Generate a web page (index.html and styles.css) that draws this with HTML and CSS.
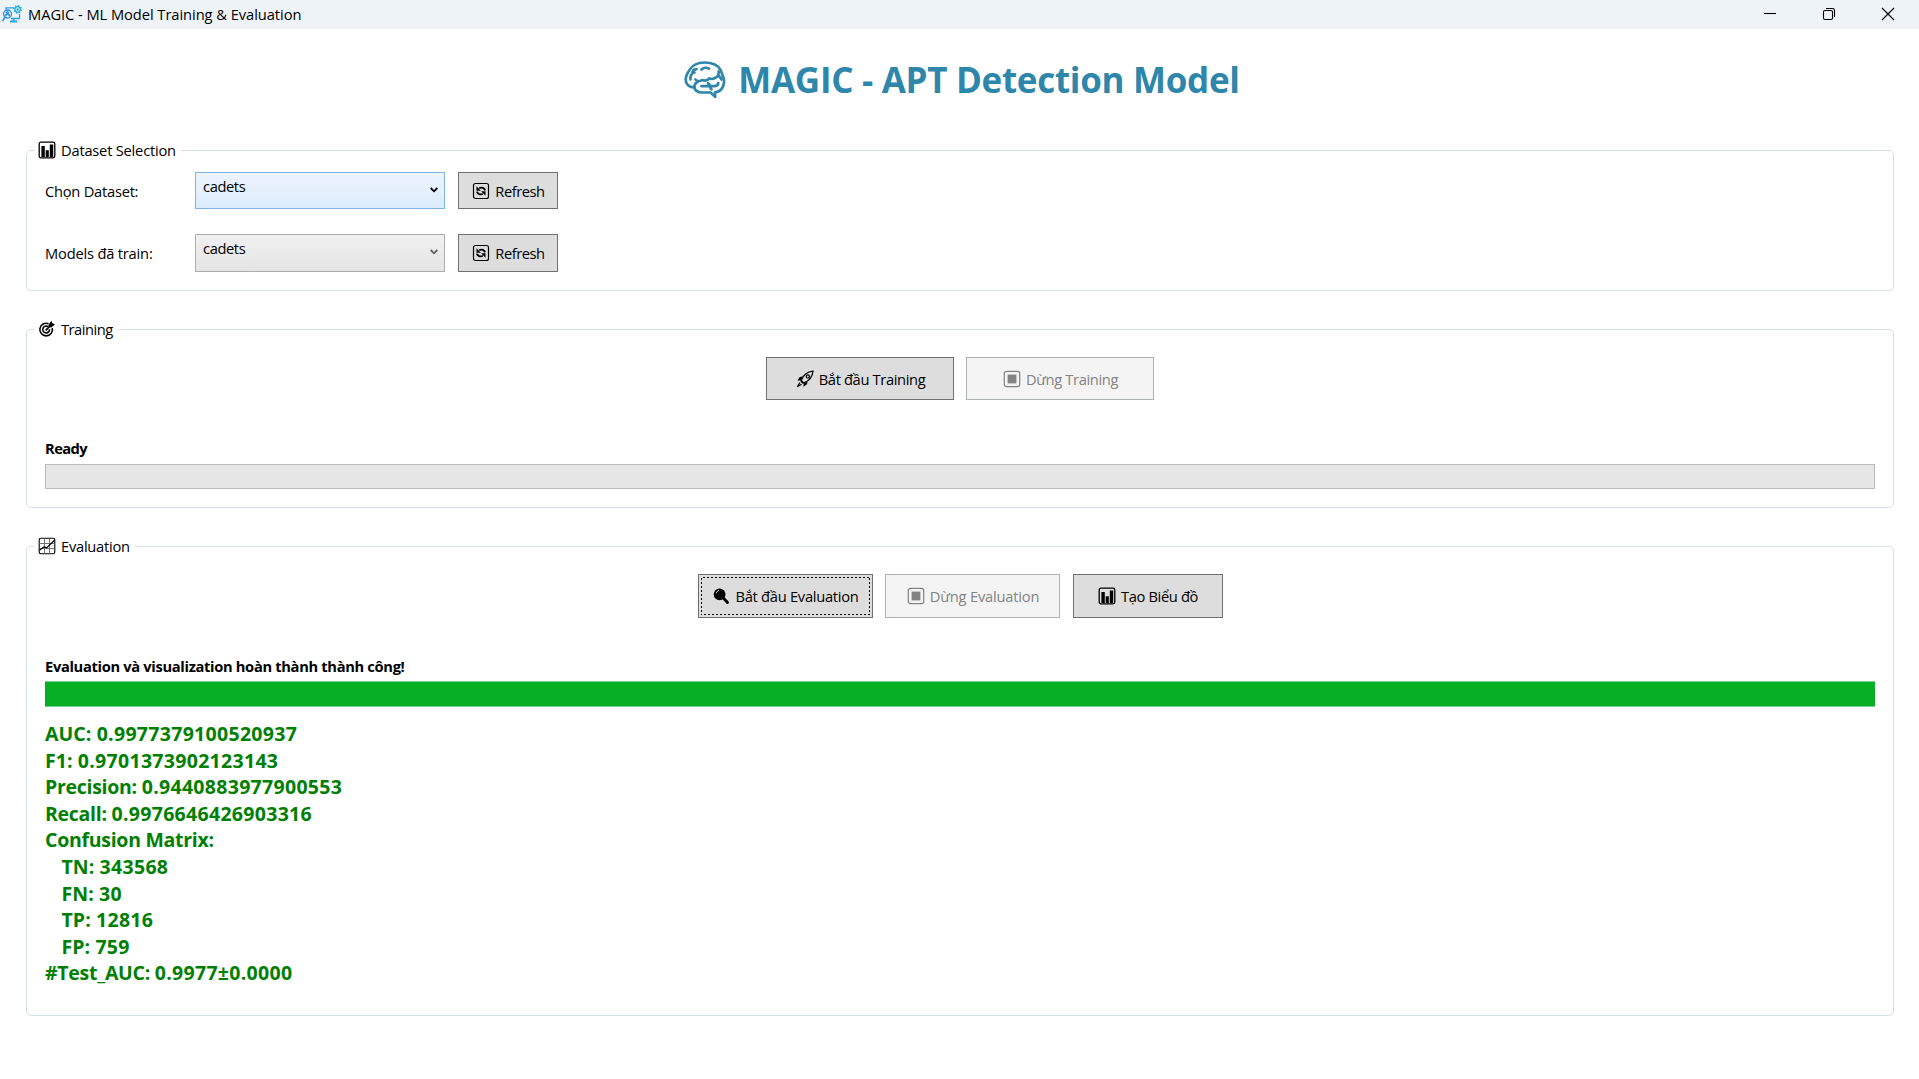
FILE: index.html
```html
<!DOCTYPE html>
<html lang="vi">
<head>
<meta charset="utf-8">
<title>MAGIC - ML Model Training &amp; Evaluation</title>
<link rel="stylesheet" href="styles.css">
</head>
<body>
<svg class="defs" width="0" height="0" aria-hidden="true">
  <symbol id="i-chart" viewBox="0 0 18 18">
    <rect x="1.2" y="1.2" width="15.6" height="15.6" rx="1.8" fill="none" stroke="currentColor" stroke-width="1.3"/>
    <path d="M3.400 5h3.400v11H3.400zM7.700 9.300h3.100V16H7.700zM11.800 3.600h3.400V16h-3.400z" fill="currentColor"/>
  </symbol>
  <symbol id="i-refresh" viewBox="0 0 18 18">
    <rect x="1.5" y="1.5" width="15" height="15" rx="2" fill="none" stroke="currentColor" stroke-width="1.2"/>
    <path d="M13 8.3C12.6 6 9.5 4.9 7.2 6.3M5 9.7c.4 2.3 3.500 3.400 5.800 2" fill="none" stroke="currentColor" stroke-width="1.9"/>
    <path d="M4.500 4.300v4.400h4.400zM13.500 13.700V9.300H9.100z" fill="currentColor"/>
  </symbol>
  <symbol id="i-target" viewBox="0 0 18 18">
    <path d="M10.500 3.700A6.300 6.300 0 1 0 14.300 8.200M10 6.700a3.400 3.400 0 1 0 1.500 2.400" fill="none" stroke="currentColor" stroke-width="1.600"/>
    <path d="M7.700 10.400L13 5" stroke="currentColor" stroke-width="1.700"/>
    <path d="M10.400 4.900L13.400 .8l.9 2.500 2.700.9-3.700 3.300-2.600-.2z" fill="currentColor"/>
  </symbol>
  <symbol id="i-trend" viewBox="0 0 18 18">
    <rect x="1.200" y="1.200" width="15.600" height="15.600" rx="1.800" fill="none" stroke="currentColor" stroke-width="1.100"/>
    <path d="M6.500 1.500v15M11.500 1.500v15M1.500 6.500h15M1.500 11.500h15" stroke="#666" stroke-width=".9"/>
    <path d="M1.500 13.300l4.300-3.400 2.800 1L16.500 3.200" fill="none" stroke="currentColor" stroke-width="1.200"/>
  </symbol>
  <symbol id="i-rocket" viewBox="0 0 18 18">
    <path d="M5.200 10.500C7 5.500 11 1.800 17 1.200c-.6 5.800-4.200 9.800-9.300 11.700z" fill="none" stroke="currentColor" stroke-width="1.300"/>
    <circle cx="11.800" cy="6.400" r="1.600" fill="none" stroke="currentColor" stroke-width="1.200"/>
    <path d="M6.800 6.400L3.800 7 1.400 10.600l3.400-.2zM11.600 11.300l-.6 3-3.600 2.500.3-3.600z" fill="currentColor"/>
    <path d="M4.800 11.200l2.200 2.200M4 12.500l-2.800 4.300 4.300-2.600" fill="none" stroke="currentColor" stroke-width="1.200"/>
  </symbol>
  <symbol id="i-stop" viewBox="0 0 18 18">
    <rect x="1.300" y="1.300" width="15.400" height="15.400" rx="2.200" fill="none" stroke="currentColor" stroke-width="1.200"/>
    <path d="M4.600 4.600h8.800v8.800H4.600z" fill="currentColor"/>
  </symbol>
  <symbol id="i-search" viewBox="0 0 18 18">
    <circle cx="7.600" cy="7.400" r="5.900" fill="currentColor"/>
    <path d="M4.300 6.200c.3-1.400 1.200-2.300 2.600-2.600" fill="none" stroke="#ddd" stroke-width="1"/>
    <path d="M11.500 11.300l4 4.200" stroke="currentColor" stroke-width="2.900" stroke-linecap="round"/>
  </symbol>
</svg>

<header class="titlebar">
  <svg class="app-icon" viewBox="0 0 20 18" fill="none" stroke="#2b8fe8" stroke-width="1.300">
    <path d="M4 4.600V2.800h8.500M17.500 9v4.500H9" stroke="#23a2f0"/>
    <path d="M11.500 13.500v3M8 16.500h7" stroke="#22a6ea" stroke-width="1.800"/>
    <circle cx="5.500" cy="9" r="4"/>
    <path d="M3.500 11.300c.3-3 3.700-3 4 0M2.700 12.500L.6 16.200" stroke-width="1.600"/>
    <circle cx="5.500" cy="7.600" r="1"/>
    <circle cx="15.600" cy="4.400" r="2.700" stroke="#1eb0d8"/>
    <circle cx="15.600" cy="4.400" r="3.800" stroke="#1eb0d8" stroke-dasharray="1.400 1.580"/>
    <circle cx="15.600" cy="4.400" r=".6" stroke="#1eb0d8"/>
  </svg>
  <span class="titlebar-text">MAGIC - ML Model Training &amp; Evaluation</span>
  <div class="window-controls">
    <svg viewBox="0 0 14 14"><path d="M1 6.500h12"/></svg>
    <svg viewBox="0 0 14 14"><rect x="1.500" y="3.500" width="9" height="9" rx="1.500"/><path d="M4 1.500h6.500a2 2 0 0 1 2 2V10"/></svg>
    <svg viewBox="0 0 14 14"><path d="M1 1l12 12M13 1L1 13"/></svg>
  </div>
</header>

<main class="content">
  <h1 class="heading">
    <svg class="brain" viewBox="0 0 42 38" fill="none" stroke="currentColor" stroke-width="2.700" stroke-linecap="round" stroke-linejoin="round">
      <path d="M10.500 26.300C4.500 26.500 1.200 22.500 1.800 17.500 2 13.500 4 12 4.800 10 7.500 4.500 14 1.500 20.500 1.500c8 0 13.500 2.800 16 7.500 1.200 2.300 1.300 3.700 2.300 5.800 1.600 4 1.800 8-.3 11.700-1.700 3-4.500 4.700-7.500 4.900l.2 4.400-4.700-4.300H18c-4.500 0-7.800-2.200-7.500-6 .1-2.300 1.500-4 3.300-4.800"/>
      <path d="M6.500 18.500c-.8-4 1.500-6.500 4-7M8.500 12c0-2 1.700-3.500 4-3.800M17.500 8.500c1.800-2 5-2.300 7.500-.8"/>
      <path d="M11.500 18.500c1.500 1.800 4.500 2 6.500.5 2.300.8 5.500.5 7.300-1.500M25.300 17.500c3.500 1 7.500-.5 9-3.800.6-1.300.5-2.200.3-3.200M34.500 14.500c1.500 1.500 2.300 2.500 3 4"/>
      <path d="M17.500 25.200h13c2.200 0 3.500-1.300 3.800-3.200M26 25.200c-.2-1.500-1-2.500-2-3M27.500 28.300c-.8-.8-1.300-1.700-1.500-3"/>
    </svg>
    <span>MAGIC - APT Detection Model</span>
  </h1>

  <section class="group group-dataset">
    <h2 class="legend"><svg class="icon"><use href="#i-chart"/></svg><span class="t-dataset">Dataset Selection</span></h2>
    <div class="field-row">
      <label class="label-pick">Chọn Dataset:</label>
      <div class="combo combo-hover"><span>cadets</span><svg class="arrow" viewBox="0 0 8 6"><path d="M.7 1L4 4.300 7.300 1"/></svg></div>
      <button class="btn btn-refresh"><svg class="icon"><use href="#i-refresh"/></svg><span>Refresh</span></button>
    </div>
    <div class="field-row field-row-tall">
      <label class="label-models">Models đã train:</label>
      <div class="combo"><span>cadets</span><svg class="arrow" viewBox="0 0 8 6"><path d="M.7 1L4 4.300 7.300 1"/></svg></div>
      <button class="btn btn-refresh"><svg class="icon"><use href="#i-refresh"/></svg><span>Refresh</span></button>
    </div>
  </section>

  <section class="group group-training">
    <h2 class="legend"><svg class="icon"><use href="#i-target"/></svg><span class="t-training">Training</span></h2>
    <div class="actions">
      <button class="btn btn-train"><svg class="icon"><use href="#i-rocket"/></svg><span>Bắt đầu Training</span></button>
      <button class="btn btn-train" disabled><svg class="icon"><use href="#i-stop"/></svg><span>Dừng Training</span></button>
    </div>
    <p class="status status-ready">Ready</p>
    <div class="progress"></div>
  </section>

  <section class="group group-evaluation">
    <h2 class="legend"><svg class="icon"><use href="#i-trend"/></svg><span class="t-evaluation">Evaluation</span></h2>
    <div class="actions actions-eval">
      <button class="btn btn-eval btn-focus"><svg class="icon"><use href="#i-search"/></svg><span>Bắt đầu Evaluation</span></button>
      <button class="btn btn-eval" disabled><svg class="icon"><use href="#i-stop"/></svg><span class="t-stop-eval">Dừng Evaluation</span></button>
      <button class="btn btn-plot"><svg class="icon"><use href="#i-chart"/></svg><span>Tạo Biểu đồ</span></button>
    </div>
    <p class="status">Evaluation và visualization hoàn thành thành công!</p>
    <div class="progress progress-done"></div>
    <ul class="results">
      <li><span class="short">AUC: </span>0.9977379100520937</li>
      <li><span class="short">F1: </span>0.9701373902123143</li>
      <li><span class="name">Precision: </span>0.9440883977900553</li>
      <li><span class="name">Recall: </span>0.9976646426903316</li>
      <li><span class="name">Confusion Matrix:</span></li>
      <li class="sub"><span class="short">TN: </span>343568</li>
      <li class="sub"><span class="short">FN: </span>30</li>
      <li class="sub"><span class="short">TP: </span>12816</li>
      <li class="sub"><span class="short">FP: </span>759</li>
      <li><span class="name">#Test_AUC: </span>0.9977±0.0000</li>
    </ul>
  </section>
</main>
</body>
</html>
```

FILE: styles.css
```css
* { box-sizing: border-box; }

body {
  margin: 0;
  height: 1079px;
  overflow: hidden;
  background: #fff;
  color: #000;
  font: 400 14.7px/20px "Open Sans", "Noto Sans", sans-serif;
  letter-spacing: -0.25px;
}

h1, h2, p, ul { margin: 0; padding: 0; font: inherit; }

.defs { display: block; position: absolute; }
.icon { width: 18px; height: 18px; flex: none; }

/* Title bar */
.titlebar {
  display: flex;
  align-items: center;
  height: 29px;
  padding: 0 24px 0 2px;
  background: #eef3f8;
}
.app-icon { width: 20px; height: 18px; margin-top: -1px; }
.titlebar-text { margin: -2px 0 0 6px; letter-spacing: -0.06px; }
.window-controls { display: flex; gap: 45px; margin-left: auto; }
.window-controls svg {
  width: 14px;
  height: 14px;
  margin-top: -1px;
  fill: none;
  stroke: #000;
  stroke-width: 1.1;
}

.content { padding: 0 25px 0 26px; }

.heading {
  display: flex;
  justify-content: center;
  align-items: center;
  height: 48px;
  margin: 27px 0 46px;
  padding-left: 4px;
  color: #2e86ab;
  font-size: 35px;
  font-weight: 700;
  line-height: 48px;
  letter-spacing: -0.304px;
}
.brain { width: 42px; height: 38px; margin-right: 12px; }

/* Group boxes */
.group {
  border: 1px solid #d5dfe5;
  border-radius: 5px;
  padding: 0 18px;
}
.group-dataset { height: 141px; }
.group-training { height: 179px; margin-top: 38px; }
.group-evaluation { height: 470px; margin-top: 38px; }

.legend {
  display: flex;
  align-items: center;
  gap: 5px;
  width: max-content;
  height: 20px;
  margin: -11px 0 0 -11px;
  padding: 0 5px 0 4px;
  background: #fff;
}
.legend span { margin-top: -1px; }
.t-dataset { letter-spacing: -0.22px; }
.t-training { letter-spacing: -0.5px; }

.field-row {
  display: flex;
  align-items: center;
  height: 37px;
  margin-top: 12px;
}
.field-row-tall { height: 38px; margin-top: 25px; }
.field-row label { width: 150px; padding-top: 1px; }
.field-row-tall label { padding-top: 0; }
.label-models { letter-spacing: -0.2px; }

.combo {
  display: flex;
  justify-content: space-between;
  width: 250px;
  height: 100%;
  padding: 3px 6px 0 7px;
  border: 1px solid #acacac;
  background: linear-gradient(#f0f0f0, #e5e5e5);
  letter-spacing: -0.4px;
}
.combo-hover {
  border-color: #7eb4ea;
  background: linear-gradient(#ecf4fc, #dcecfc);
}
.arrow {
  width: 8px;
  height: 6px;
  margin-top: 11px;
  fill: none;
  stroke: #606060;
  stroke-width: 1.8;
}
.combo-hover .arrow { stroke: #000; }

.btn {
  display: flex;
  justify-content: center;
  align-items: center;
  gap: 5px;
  height: 43px;
  padding: 1px 0 0 1px;
  border: 1px solid #707070;
  background: #ddd;
  color: #000;
  font: inherit;
  letter-spacing: -0.36px;
}
.btn:disabled {
  border-color: #adb2b5;
  background: #f4f4f4;
  color: #838383;
}
.btn-refresh {
  width: 100px;
  height: 100%;
  margin-left: 13px;
  letter-spacing: -0.45px;
}
.field-row-tall .btn { padding-top: 0; padding-bottom: 1px; }
.btn-train { width: 188px; }
.btn-eval { width: 175px; letter-spacing: -0.27px; }
.btn-plot { width: 150px; }
.t-stop-eval { letter-spacing: -0.2px; }
.btn-focus { position: relative; }
.btn-focus::after {
  content: "";
  position: absolute;
  inset: 2px;
  border: 1px dashed #000;
  border-image: repeating-linear-gradient(45deg, #000 0 1.414px, transparent 1.414px 2.828px) 1;
}

.actions {
  display: flex;
  justify-content: center;
  gap: 12px;
  margin: 18px 0 38px;
}
.actions-eval { gap: 12.5px; }
.actions-eval .btn { height: 44px; padding-top: 0; padding-bottom: 1px; }

.status { font-weight: 700; letter-spacing: -0.329px; }
.status-ready { letter-spacing: -0.55px; }

.progress {
  height: 25px;
  margin-top: 6px;
  border: 1px solid #bcbcbc;
  background: #e6e6e6;
}
.progress-done {
  height: 26px;
  margin-top: 5px;
  border-width: 1px 0;
  border-color: #7fcf8e;
  background: #06b025;
}

/* Metrics */
.results {
  margin-top: 14px;
  list-style: none;
  color: #008000;
  font-size: 19.5px;
  font-weight: 700;
  line-height: 26.6px;
  letter-spacing: 0.3px;
}
.short { letter-spacing: 0.08px; }
.name { letter-spacing: -0.28px; }
.sub { padding-left: 16.5px; }
```
